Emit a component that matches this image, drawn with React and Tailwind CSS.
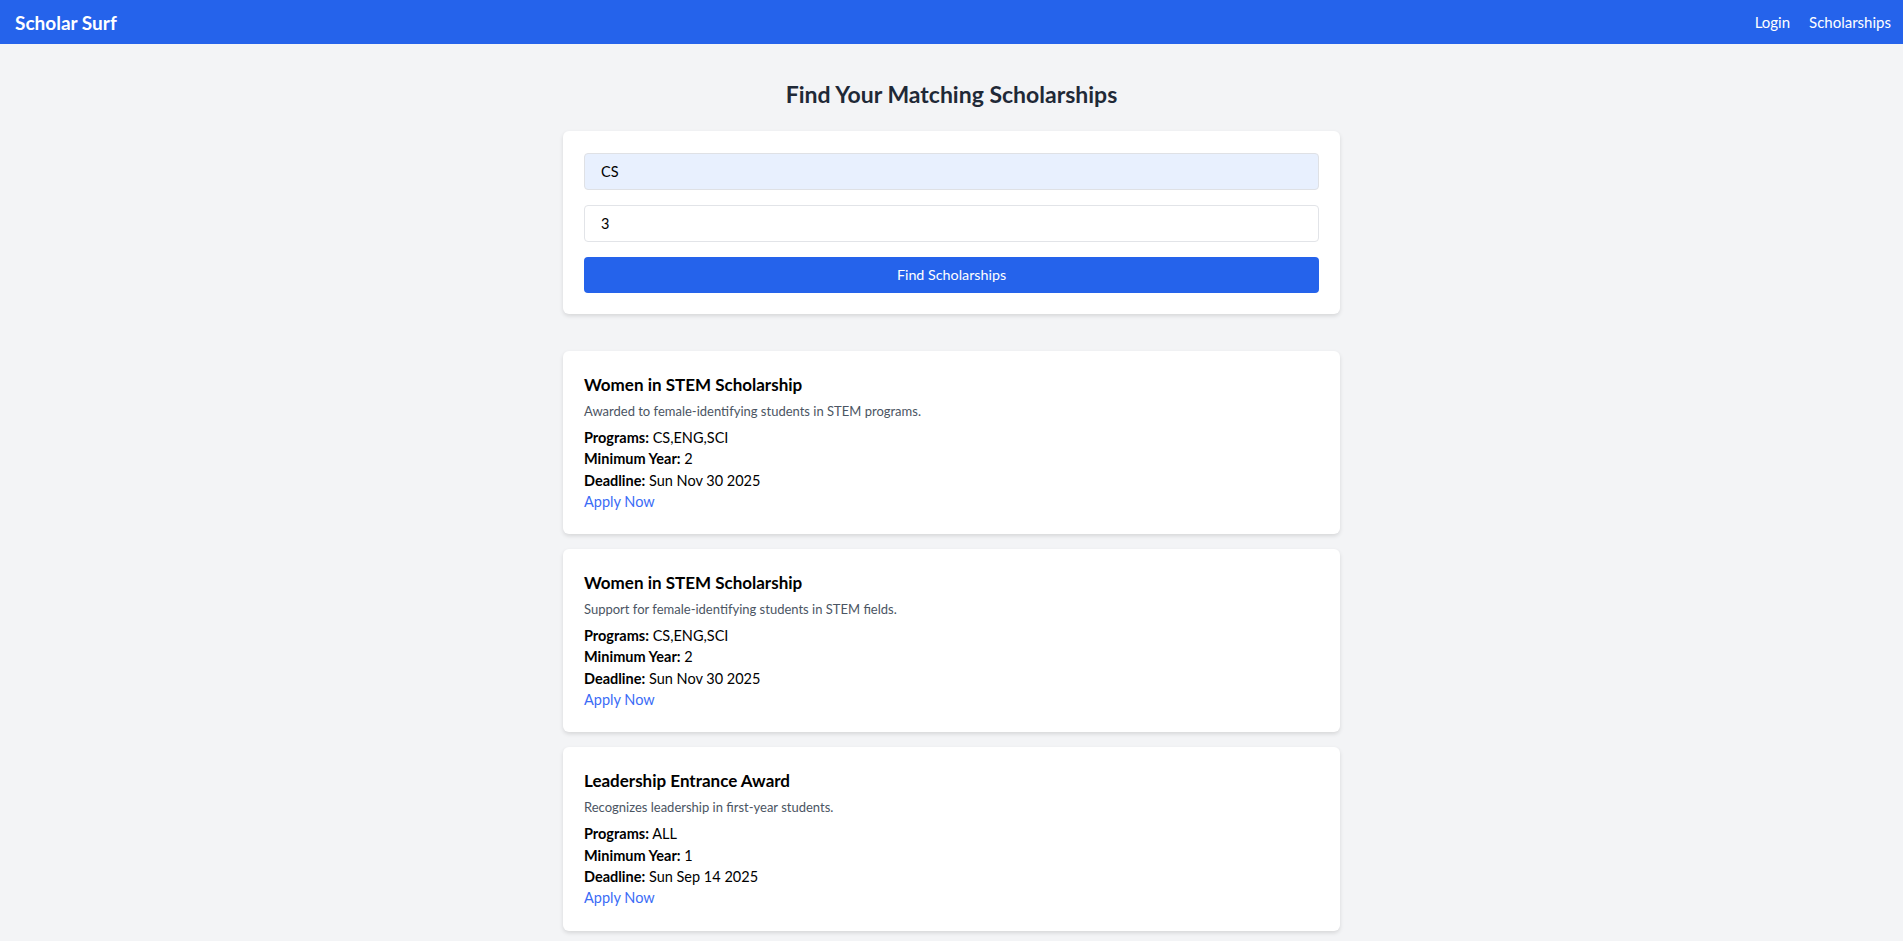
import React from "react";

const results = [
  {
    name: "Women in STEM Scholarship",
    description: "Awarded to female-identifying students in STEM programs.",
    programs: "CS,ENG,SCI",
    minYear: 2,
    deadline: "Sun Nov 30 2025",
  },
  {
    name: "Women in STEM Scholarship",
    description: "Support for female-identifying students in STEM fields.",
    programs: "CS,ENG,SCI",
    minYear: 2,
    deadline: "Sun Nov 30 2025",
  },
  {
    name: "Leadership Entrance Award",
    description: "Recognizes leadership in first-year students.",
    programs: "ALL",
    minYear: 1,
    deadline: "Sun Sep 14 2025",
  },
];

function Navbar() {
  return (
    <nav className="h-[44px] bg-[#2563eb] flex items-center justify-between pl-[15px] pr-[12px] text-white">
      <a href="#" className="text-[19px] font-bold leading-none">Scholar Surf</a>
      <div className="flex items-center gap-[19px] text-[15px]">
        <a href="#">Login</a>
        <a href="#">Scholarships</a>
      </div>
    </nav>
  );
}

function ScholarshipCard({ s }) {
  return (
    <div className="bg-white rounded-md shadow-[0_2px_4px_rgba(0,0,0,0.12)] px-[21px] pt-[21px] pb-[22px] text-black">
      {/* titulo */}
      <h3 className="text-[17px] font-bold leading-[24px] mt-[1px]">{s.name}</h3>
      <p className="text-[13px] text-[#4b5563] leading-[19px] mt-[5px]">{s.description}</p>
      <div className="mt-[6px] text-[14.5px] leading-[21.3px]">
        <p><strong>Programs:</strong> {s.programs}</p>
        <p><strong>Minimum Year:</strong> {s.minYear}</p>
        <p><strong>Deadline:</strong> {s.deadline}</p>
        <a href="#" className="text-[#3b6cf6]">Apply Now</a>
      </div>
    </div>
  );
}

export default function App() {
  return (
    <div className="min-h-screen bg-[#f3f4f6]" style={{ fontFamily: 'Lato, "Open Sans", sans-serif' }}>
      <Navbar />

      <main className="w-[777px] mx-auto pb-[10px]">
        <h1 className="text-center text-[23px] font-bold text-[#1f2937] leading-[32px] mt-[34px] mb-[21px]">
          Find Your Matching Scholarships
        </h1>

        {/* Formulario */}
        <form className="bg-white rounded-md shadow-[0_2px_4px_rgba(0,0,0,0.12)] px-[21px] pt-[22px] pb-[21px] flex flex-col">
          <input
            type="text"
            defaultValue="CS"
            className="h-[37px] rounded-[4px] border border-[#dfe1e5] bg-[#e8f0fe] px-4 text-[14.5px] text-black focus:outline-none"
          />
          <input
            type="number"
            defaultValue="3"
            className="h-[37px] mt-[15px] rounded-[4px] border border-[#e2e4e8] bg-white px-4 text-[14.5px] text-black focus:outline-none"
          />
          <button
            type="button"
            className="h-[36px] mt-[15px] rounded-[4px] bg-[#2563eb] text-white text-[14.3px]"
          >
            Find Scholarships
          </button>
        </form>

        {/* Resultados */}
        <div className="mt-[37px] flex flex-col gap-[15px]">
          {results.map((s, i) => (
            <ScholarshipCard key={i} s={s} />
          ))}
        </div>
      </main>
    </div>
  );
}
